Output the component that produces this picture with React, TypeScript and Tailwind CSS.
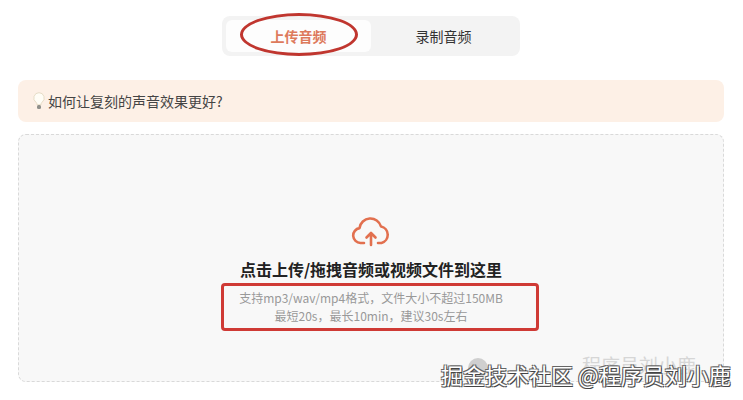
export default function App() {
  const font = { fontFamily: '"Noto Sans CJK SC", "Noto Sans", sans-serif' };
  return (
    <div className="relative w-[743px] h-[400px] overflow-hidden bg-white px-[18px] pt-4" style={font}>
      <div className="ml-[204px] flex h-10 w-[298px] items-center rounded-lg bg-[#f3f3f3] p-1">
        <div className="flex h-8 w-[145px] items-center justify-center rounded-md bg-[#fdfdfd] text-sm font-bold text-[#dd7a5c]">
          上传音频
        </div>
        <div className="flex h-8 flex-1 items-center justify-center text-sm text-[#333]">录制音频</div>
      </div>

      <div className="mt-6 flex h-[42px] w-[706px] items-center gap-[3px] rounded-lg bg-[#fdf0e6] pl-[15px] text-sm text-[#444]">
        <svg width="12" height="18" viewBox="0 0 12 18" className="shrink-0">
          <path d="M6 .7a5.300 5.300 0 0 0-3 9.600c.7.600 1 1.400 1 2.500h4c0-1.100.3-1.900 1-2.500a5.300 5.300 0 0 0-3-9.600z" fill="#fffdf6" stroke="#e0d5bd" strokeWidth="0.8" />
          <rect x="4" y="13" width="4" height="4" rx="1.500" fill="#8f8f8a" />
        </svg>
        如何让复刻的声音效果更好?
      </div>

      <div className="mt-3 flex h-[248px] w-[706px] flex-col items-center rounded-lg border border-dashed border-[#d9d9d9] bg-[#f8f8f8] pt-[82px]">
        <svg width="40" height="30" viewBox="0 0 40 30" fill="none" stroke="#e2704f" strokeWidth="2.600" strokeLinecap="round" strokeLinejoin="round">
          <path d="M13 26H9.500a7.500 7.500 0 0 1-1-14.900A11 11 0 0 1 30 9.500a8.500 8.500 0 0 1 .5 16.500H27" />
          <path d="M20 28V16M15.500 20.500 20 16l4.500 4.500" />
        </svg>
        <div className="mt-[10px] text-base leading-[24px] font-bold text-[#222]">点击上传/拖拽音频或视频文件到这里</div>
        <div className="mt-2 text-center text-xs leading-[18px] text-[#999]">
          <div>支持mp3/wav/mp4格式，文件大小不超过150MB</div>
          <div>最短20s，最长10min，建议30s左右</div>
        </div>
      </div>

      <div className="absolute left-[240px] top-[13px] h-[43px] w-[118px] rounded-[50%] border-[3px] border-[#c0362f]" />
      <div className="absolute left-[221px] top-[283px] h-[48px] w-[318px] rounded-[4px] border-[3px] border-[#cf3a35]" />

      <div className="absolute left-[468px] top-[358px] size-5 rounded-full bg-[#cfcfcf]" />
      <div className="absolute left-[582px] top-[353px] text-[19px] leading-6 whitespace-nowrap text-[#d6d6d6]">程序员刘小鹿</div>
      <div
        className="absolute left-[441px] top-[360px] text-[22px] leading-7 whitespace-nowrap text-white"
        style={{ textShadow: "1px 1px 0 #444, -1px -1px 0 #666, 1px -1px 0 #666, -1px 1px 0 #666" }}
      >
        掘金技术社区 @程序员刘小鹿
      </div>
    </div>
  );
}
